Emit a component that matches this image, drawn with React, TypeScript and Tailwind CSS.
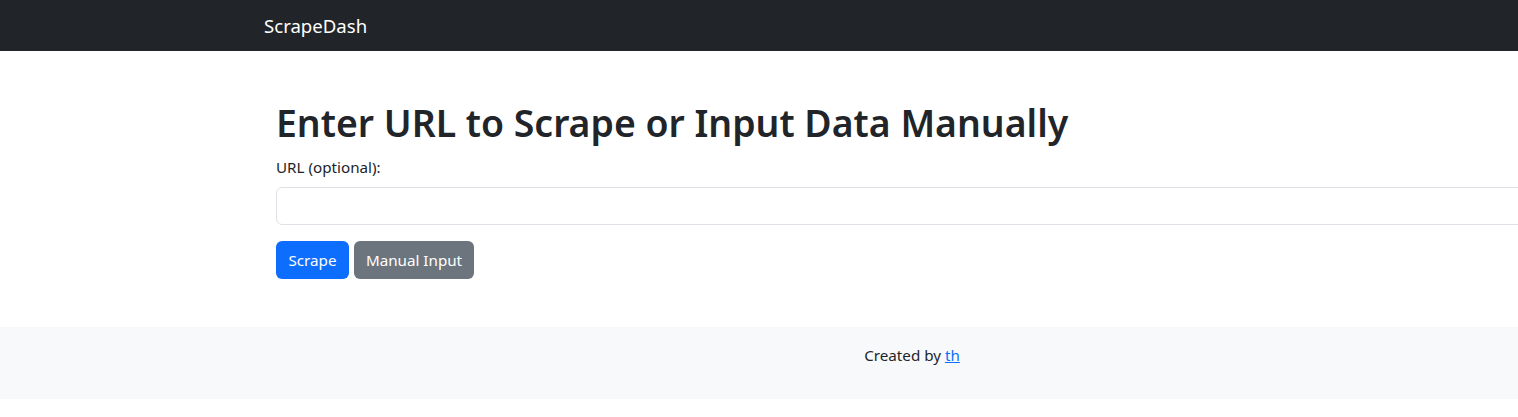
import React from "react";

export default function App() {
  return (
    <div className="w-full overflow-hidden bg-white text-[#212529]" style={{ fontFamily: "'Noto Sans', 'Open Sans', sans-serif" }}>
      <div className="w-[1824px]">
        <nav className="bg-[#212529] h-[51px] flex items-center">
          <div className="w-[1320px] mx-auto px-3">
            <span className="text-white text-[18.6px] leading-[30px]">ScrapeDash</span>
          </div>
        </nav>
        <main className="w-[1320px] mx-auto px-6 pt-12 pb-12">
          <h1 className="text-[37.4px] leading-[48px] font-semibold mb-2">Enter URL to Scrape or Input Data Manually</h1>
          <label className="block text-[15.2px] leading-6 mb-2">URL (optional):</label>
          <div className="h-[38px] w-full rounded-md border border-[#dee2e6] bg-white" />
          <div className="mt-4 flex gap-[5px]">
            <button className="h-[38px] w-[73px] rounded-md bg-[#0d6efd] text-white text-[15.2px]">Scrape</button>
            <button className="h-[38px] w-[120px] rounded-md bg-[#6c757d] text-white text-[15.2px]">Manual Input</button>
          </div>
        </main>
        <footer className="bg-[#f8f9fa] pt-4 pb-8 text-center text-[15.2px] leading-6">
          Created by <a href="#" className="text-[#0d6efd] underline">th</a>
        </footer>
        <div className="h-[18px]" />
      </div>
    </div>
  );
}
